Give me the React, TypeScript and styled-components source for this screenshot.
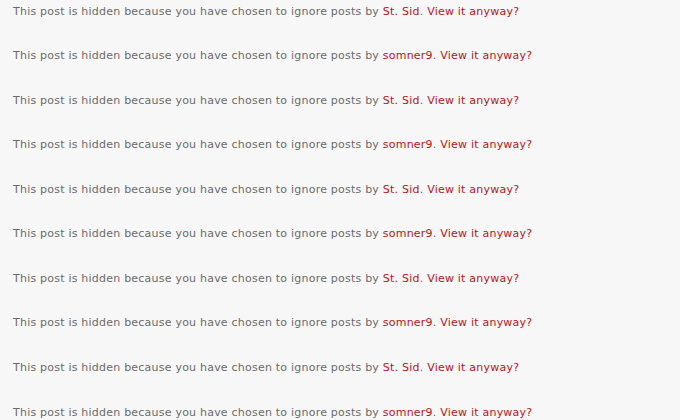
import React from "react";
import styled, { createGlobalStyle } from "styled-components";

const Global = createGlobalStyle`
  html, body { margin: 0; padding: 0; background: #f7f7f7; }
  body { font-family: "DejaVu Sans", Verdana, sans-serif; }
`;

const List = styled.div`
  display: flex;
  flex-direction: column;
  height: 420px;
  overflow: hidden;
  box-sizing: border-box;
  padding: 4.6px 0 0 13px;
`;

const Row = styled.div`
  flex: none;
  height: 44.56px;
  font-size: 11px;
  line-height: 14px;
  letter-spacing: 0.22px;
  color: #6b6b6b;
  white-space: nowrap;
`;

const Link = styled.a`
  color: #bb1420;
  text-decoration: none;
`;

const users = ["St. Sid", "somner9"];

export default function App() {
  return (
    <>
      <Global />
      <List>
        {Array.from({ length: 10 }, (_, i) => (
          <Row key={i}>
            This post is hidden because you have chosen to ignore posts by{" "}
            <Link href="#">{users[i % 2]}</Link>. <Link href="#">View it anyway?</Link>
          </Row>
        ))}
      </List>
    </>
  );
}
